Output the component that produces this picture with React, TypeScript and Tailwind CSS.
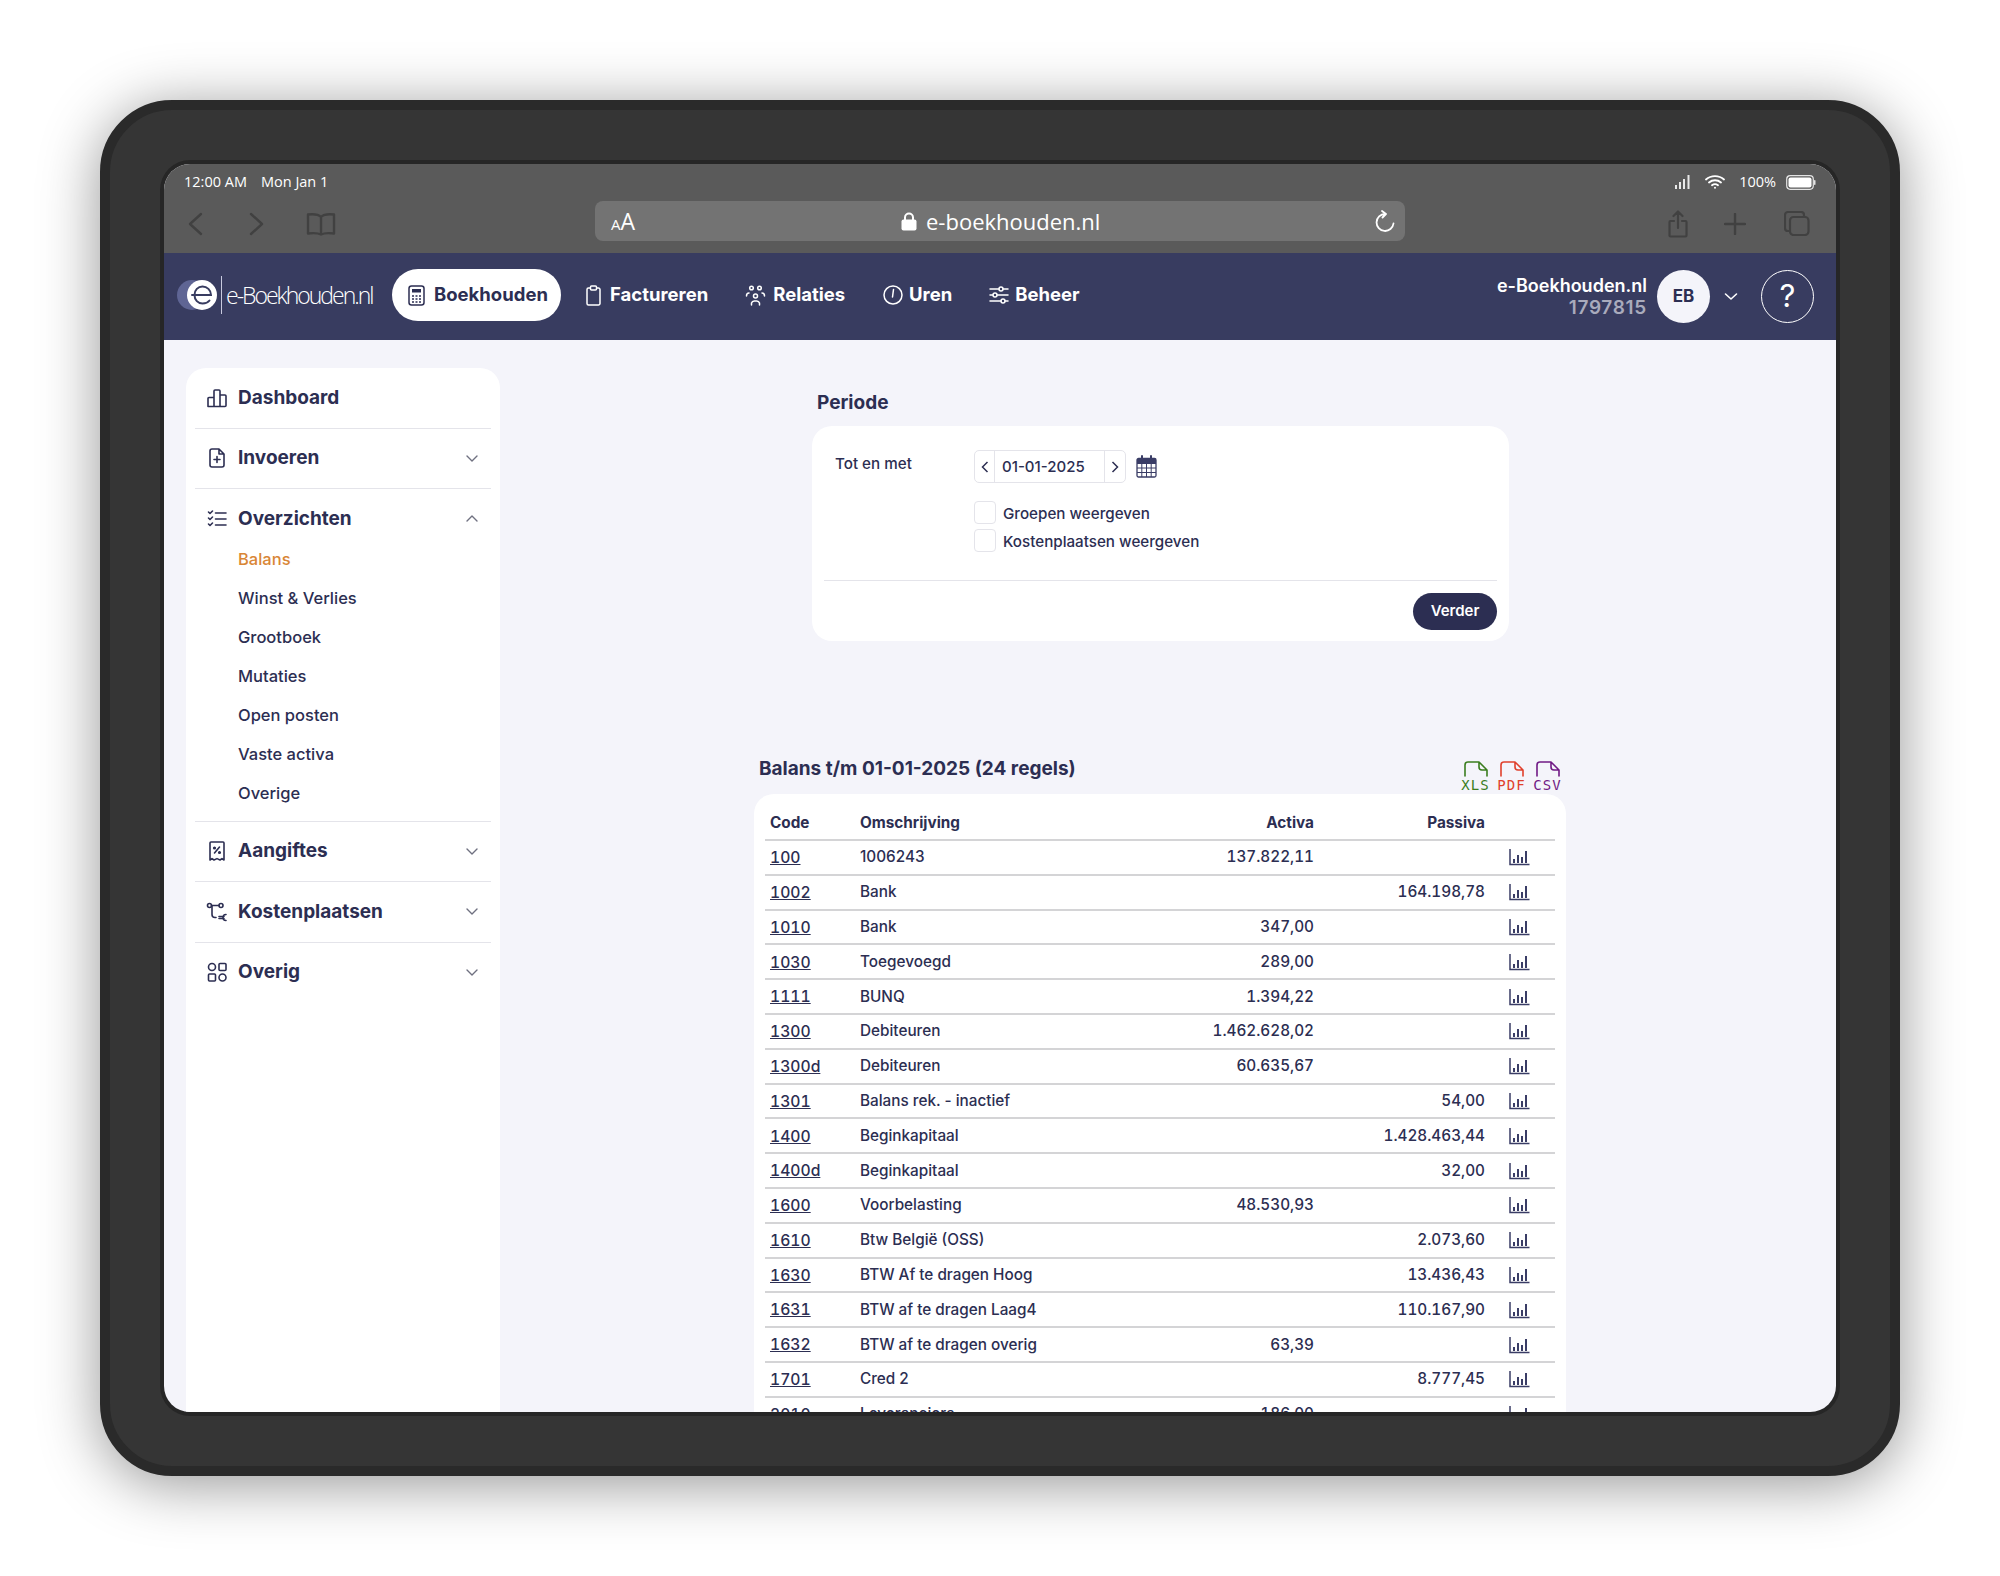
import React from "react";

const ink = "#2c2e52";

const rows: [string, string, string, string][] = [
  ["100", "1006243", "137.822,11", ""],
  ["1002", "Bank", "", "164.198,78"],
  ["1010", "Bank", "347,00", ""],
  ["1030", "Toegevoegd", "289,00", ""],
  ["1111", "BUNQ", "1.394,22", ""],
  ["1300", "Debiteuren", "1.462.628,02", ""],
  ["1300d", "Debiteuren", "60.635,67", ""],
  ["1301", "Balans rek. - inactief", "", "54,00"],
  ["1400", "Beginkapitaal", "", "1.428.463,44"],
  ["1400d", "Beginkapitaal", "", "32,00"],
  ["1600", "Voorbelasting", "48.530,93", ""],
  ["1610", "Btw België (OSS)", "", "2.073,60"],
  ["1630", "BTW Af te dragen Hoog", "", "13.436,43"],
  ["1631", "BTW af te dragen Laag4", "", "110.167,90"],
  ["1632", "BTW af te dragen overig", "63,39", ""],
  ["1701", "Cred 2", "", "8.777,45"],
  ["2010", "Leveranciers", "186,00", ""],
];

function Chevron({ up = false }: { up?: boolean }) {
  return (
    <svg width="14" height="9" viewBox="0 0 14 9" fill="none" stroke="#6f7080" strokeWidth="1.4" strokeLinecap="round" strokeLinejoin="round">
      <path d={up ? "M2 7l5-5 5 5" : "M2 2l5 5 5-5"} />
    </svg>
  );
}

function Stroke({ children, w = 22, h = 22, color = ink, sw = 1.6 }: { children: React.ReactNode; w?: number; h?: number; color?: string; sw?: number }) {
  return (
    <svg width={w} height={h} viewBox="0 0 22 22" fill="none" stroke={color} strokeWidth={sw} strokeLinecap="round" strokeLinejoin="round" className="shrink-0">
      {children}
    </svg>
  );
}

const IconDashboard = () => (
  <Stroke><path d="M2 19.500V11.500a1 1 0 0 1 1-1h5v9H3a1 1 0 0 1-1-1zM8 19.500V4a1 1 0 0 1 1-1h4a1 1 0 0 1 1 1v15.500M14 8h5a1 1 0 0 1 1 1v9.500a1 1 0 0 1-1 1H3" /></Stroke>
);
const IconInvoeren = () => (
  <Stroke><path d="M13 2H6a2 2 0 0 0-2 2v14a2 2 0 0 0 2 2h10a2 2 0 0 0 2-2V7l-5-5zM13 2v5h5M11 9.500v6M8 12.500h6" /></Stroke>
);
const IconOverzichten = () => (
  <Stroke><path d="M9.500 5H20M9.500 11H20M9.500 17H20M2.500 4l1.500 1.500L6.500 3M2.500 10l1.500 1.500L6.500 9M2.500 16l1.500 1.500L6.500 15" /></Stroke>
);
const IconAangiftes = () => (
  <Stroke>
    <path d="M4 20V3a1 1 0 0 1 1-1h12a1 1 0 0 1 1 1v17l-2-1.400-2 1.400-3-1.400-3 1.400-2-1.400-2 1.400zM8.500 13l5-6" />
    <circle cx="8.500" cy="8" r="0.800" fill={ink} />
    <circle cx="13.500" cy="12.500" r="0.800" fill={ink} />
  </Stroke>
);
const IconKosten = () => (
  <Stroke><circle cx="3.500" cy="4.500" r="2" /><circle cx="15" cy="4.500" r="2" /><path d="M5.500 4.500h7.500M6 4.500v9a3 3 0 0 0 3 3h1" /><path d="M20 13.500a3 3 0 1 0 0 6M13 15.500h5M13 17.500h5" /></Stroke>
);
const IconOverig = () => (
  <Stroke><circle cx="6" cy="6" r="3.500" /><rect x="13" y="2.500" width="7" height="7" rx="1" /><rect x="2.500" y="13" width="7" height="7" rx="1" /><circle cx="16.500" cy="16.500" r="3.500" /></Stroke>
);

function NavHead({ icon, label, chevron, up }: { icon: React.ReactNode; label: string; chevron?: boolean; up?: boolean }) {
  return (
    <div className="flex h-[59.500px] items-center pl-[11px] pr-[12px]">
      <span className="flex w-[22px] justify-center">{icon}</span>
      <span className="ml-[10px] flex-1 text-[19px] font-bold text-[#2c2e52]">{label}</span>
      {chevron && <Chevron up={up} />}
    </div>
  );
}

function ChartIcon() {
  return (
    <svg width="21" height="18" viewBox="0 0 21 18" fill="none" stroke="#3a3d66" strokeWidth="1.500" className="block">
      <path d="M1 1v15.500h19.500" />
      <path d="M5 15v-4M9 15V7M13 15v-6M17 15V3" strokeWidth="2" />
    </svg>
  );
}

function FileBadge({ label, color }: { label: string; color: string }) {
  return (
    <div className="flex w-[27px] flex-col items-center">
      <svg width="24" height="16" viewBox="0 0 24 16" fill="none" stroke={color} strokeWidth="1.600" strokeLinejoin="round" strokeLinecap="round">
        <path d="M1 15V4a3 3 0 0 1 3-3h11l8 8v6M15 1v5a3 3 0 0 0 3 3h5" />
      </svg>
      <span className="mt-[1px] whitespace-nowrap font-['DejaVu_Sans_Mono',monospace] text-[14px] leading-[14px] tracking-[1px]" style={{ color }}>{label}</span>
    </div>
  );
}

export default function App() {
  return (
    <div className="h-[1576px] w-[2000px] overflow-hidden bg-white p-[100px] font-['Inter',sans-serif]">
      <div className="h-[1376px] w-[1800px] rounded-[72px] border-[10px] border-[#2a2a2a] bg-[#353535] p-[50px] pb-[50px] shadow-[0_8px_60px_rgba(0,0,0,0.42)]">
        <div className="rounded-[30px] bg-[#262626] p-[4px]">
          <div className="flex h-[1248px] w-[1672px] flex-col overflow-hidden rounded-[26px] bg-[#f4f4fa]">
            {/* browser chrome */}
            <div className="h-[89px] shrink-0 bg-[#5a5a5a] pl-[20px] pr-[20px] pt-[8px]">
              <div className="flex h-[20px] items-center font-['Open_Sans',sans-serif] text-[14.500px] text-white">
                <span>12:00 AM</span>
                <span className="ml-[14px]">Mon Jan 1</span>
                <span className="flex-1" />
                <svg width="16" height="14" viewBox="0 0 16 14" fill="#e8e8e8" className="mr-[14px]">
                  <rect x="0" y="10" width="2" height="4" /><rect x="4" y="7" width="2" height="7" /><rect x="8" y="4" width="2" height="10" /><rect x="12.500" y="0" width="2" height="14" />
                </svg>
                <svg width="20" height="14" viewBox="0 0 20 14" fill="none" stroke="#fff" strokeWidth="1.800" strokeLinecap="round" className="mr-[14px]">
                  <path d="M1 4.500c5-4.500 13-4.500 18 0M4 7.500c3.500-3 8.500-3 12 0M7 10.300c1.700-1.400 4.300-1.400 6 0" />
                  <circle cx="10" cy="12.700" r="1" fill="#fff" stroke="none" />
                </svg>
                <span className="mr-[10px]">100%</span>
                <svg width="30" height="15" viewBox="0 0 30 15">
                  <rect x="0.700" y="0.700" width="26.600" height="13.600" rx="3.500" fill="none" stroke="#e4e4e4" strokeWidth="1.200" />
                  <rect x="2.500" y="2.500" width="23" height="10" rx="2" fill="#fff" />
                  <rect x="28" y="5" width="1.500" height="5" rx="0.700" fill="#e4e4e4" />
                </svg>
              </div>
              <div className="mt-[9px] flex h-[40px] items-center">
                <svg width="16" height="24" viewBox="0 0 16 24" fill="none" stroke="#414141" strokeWidth="2.400" strokeLinecap="round" strokeLinejoin="round" className="ml-[3px] mt-[6px]"><path d="M14 2L3 12l11 10" /></svg>
                <svg width="16" height="24" viewBox="0 0 16 24" fill="none" stroke="#414141" strokeWidth="2.400" strokeLinecap="round" strokeLinejoin="round" className="ml-[46px] mt-[6px]"><path d="M2 2l11 10L2 22" /></svg>
                <svg width="30" height="24" viewBox="0 0 30 24" fill="none" stroke="#414141" strokeWidth="2.400" strokeLinejoin="round" className="ml-[41px] mt-[6px]"><path d="M15 5C12 2 6 2 2 2.500v19C6 21 12 21 15 22.500 18 21 24 21 28 21.500v-19C24 2 18 2 15 5zM15 5v17" /></svg>
                <div className="ml-[259px] flex h-[40px] w-[810px] items-center rounded-[8px] bg-[#737373] pl-[16px] pr-[9px] font-['Open_Sans',sans-serif] text-white">
                  <span className="w-[290px] text-[23px] leading-none"><span className="text-[15px]">A</span>A</span>
                  <svg width="16" height="19" viewBox="0 0 16 19" fill="#fff" className="mr-[9px]">
                    <path d="M4 8V5.500a4 4 0 0 1 8 0V8" fill="none" stroke="#fff" strokeWidth="2" />
                    <rect x="0.500" y="7.500" width="15" height="11" rx="2" />
                  </svg>
                  <span className="mt-[1px] flex-1 text-[22px] font-normal">e-boekhouden.nl</span>
                  <svg width="22" height="24" viewBox="0 0 22 24" fill="none" stroke="#fff" strokeWidth="1.800" strokeLinecap="round" strokeLinejoin="round" className="mt-[2px]">
                    <path d="M11 4a8.500 8.500 0 1 0 8.500 9.500M8 1l4 3-3.500 3.500" />
                  </svg>
                </div>
                <svg width="20" height="28" viewBox="0 0 20 28" fill="none" stroke="#414141" strokeWidth="2.200" strokeLinecap="round" strokeLinejoin="round" className="ml-[263px] mt-[5px]"><path d="M6 11H2.500a1 1 0 0 0-1 1v13.500a1 1 0 0 0 1 1h15a1 1 0 0 0 1-1V12a1 1 0 0 0-1-1H14M10 18V2M5.500 6L10 1.500 14.500 6" /></svg>
                <svg width="22" height="22" viewBox="0 0 22 22" fill="none" stroke="#414141" strokeWidth="2.400" strokeLinecap="round" className="ml-[36px] mt-[5px]"><path d="M11 1v20M1 11h20" /></svg>
                <svg width="26" height="25" viewBox="0 0 26 25" fill="none" stroke="#414141" strokeWidth="2.200" strokeLinejoin="round" className="ml-[38px] mt-[5px]"><rect x="6" y="6" width="18.500" height="18" rx="3.500" /><path d="M6 20H4a3 3 0 0 1-3-3V4a3 3 0 0 1 3-3h13a3 3 0 0 1 3 3v2" /></svg>
              </div>
            </div>

            {/* app nav */}
            <div className="flex h-[87px] shrink-0 items-center bg-[#383c60] text-white">
              <div className="flex items-center pb-[3px]">
                <div className="ml-[13px] flex items-center">
                  <div className="relative h-[30px] w-[44px]">
                    <div className="absolute left-0 top-0 h-[30px] w-[30px] rounded-full bg-[#5f6594]" />
                    <div className="absolute left-[10px] top-0 flex h-[30px] w-[30px] items-center justify-center rounded-full bg-white">
                      <svg width="22" height="20" viewBox="0 0 22 20" fill="none" stroke="#383c60" strokeWidth="2" strokeLinecap="round"><path d="M1 10h19c0-5-4-8.500-8.500-8.500S3.500 5 3.500 10 7 18.500 11.500 18.500c3 0 5.500-1 7-3" /></svg>
                    </div>
                  </div>
                  <div className="h-[38px] w-px bg-[#c8cade]" />
                  <span className="ml-[4px] w-[166px] whitespace-nowrap font-['Open_Sans',sans-serif] text-[23px] font-light tracking-[-2px]">e-Boekhouden.nl</span>
                </div>
                <div className="flex h-[52px] w-[169px] items-center rounded-full bg-white pl-[16px] text-[#2c2e52]">
                  <svg width="17" height="21" viewBox="0 0 17 21" fill="none" stroke="#2c2e52" strokeWidth="1.500"><rect x="1" y="1" width="15" height="19" rx="2.500" /><rect x="4" y="4" width="9" height="3.500" fill="#2c2e52" stroke="none" /><path d="M4 11h2M7.500 11h2M11 11h2M4 14h2M7.500 14h2M11 14h2M4 17h2M7.500 17h2M11 17h2" strokeWidth="1.600" /></svg>
                  <span className="ml-[9px] text-[18.500px] font-bold">Boekhouden</span>
                </div>
                <div className="ml-[25px] flex items-center">
                  <svg width="15" height="21" viewBox="0 0 15 21" fill="none" stroke="#fff" strokeWidth="1.500" strokeLinejoin="round"><path d="M4.500 3H2.500a1.500 1.500 0 0 0-1.500 1.500v14A1.500 1.500 0 0 0 2.500 20h10a1.500 1.500 0 0 0 1.500-1.500v-14A1.500 1.500 0 0 0 12.500 3h-2" /><rect x="4.500" y="1" width="6" height="4" rx="1" /></svg>
                  <span className="ml-[9px] text-[18.500px] font-bold">Factureren</span>
                </div>
                <div className="ml-[37px] flex items-center">
                  <svg width="21" height="21" viewBox="0 0 21 21" fill="none" stroke="#fff" strokeWidth="1.500" strokeLinecap="round"><circle cx="6.500" cy="3" r="1.800" /><circle cx="14.500" cy="3" r="1.800" /><circle cx="10.500" cy="11" r="2" /><path d="M6.500 20v-2a3 3 0 0 1 3-2h2a3 3 0 0 1 3 2v2M1.500 11c0-2 1-3 2.500-3M19.500 11c0-2-1-3-2.500-3" /></svg>
                  <span className="ml-[7px] text-[18.500px] font-bold">Relaties</span>
                </div>
                <div className="ml-[38px] flex items-center">
                  <svg width="20" height="20" viewBox="0 0 20 20" fill="none" stroke="#fff" strokeWidth="1.500" strokeLinecap="round"><circle cx="10" cy="10" r="9" /><path d="M10.500 4.500L9.500 12" /></svg>
                  <span className="ml-[6px] text-[18.500px] font-bold">Uren</span>
                </div>
                <div className="ml-[37px] flex items-center">
                  <svg width="20" height="20" viewBox="0 0 20 20" fill="none" stroke="#fff" strokeWidth="1.500" strokeLinecap="round"><path d="M1 4h9M14 4h5M1 10h3M8 10h11M1 16h11M16 16h3" /><circle cx="12" cy="4" r="2" /><circle cx="6" cy="10" r="2" /><circle cx="14" cy="16" r="2" /></svg>
                  <span className="ml-[6px] text-[18.500px] font-bold">Beheer</span>
                </div>
              </div>
              <div className="flex-1" />
              <div className="mr-[10px] text-right leading-[22px]">
                <div className="text-[18px] font-semibold">e-Boekhouden.nl</div>
                <div className="text-[19px] font-semibold tracking-[0.700px] text-[#a9abbc]">1797815</div>
              </div>
              <div className="flex h-[53px] w-[53px] items-center justify-center rounded-full bg-[#f4f4fa] text-[17px] font-bold text-[#2c2e52]">EB</div>
              <svg width="14" height="9" viewBox="0 0 14 9" fill="none" stroke="#fff" strokeWidth="1.600" strokeLinecap="round" strokeLinejoin="round" className="ml-[14px]"><path d="M1.500 2l5.500 5 5.500-5" /></svg>
              <div className="ml-[23px] mr-[22px] flex h-[53px] w-[53px] items-center justify-center rounded-full border border-white text-[31px] font-normal text-white">?</div>
            </div>

            {/* body */}
            <div className="flex min-h-0 flex-1 overflow-hidden">
              {/* sidebar */}
              <aside className="ml-[22px] mt-[28px] w-[314px] shrink-0 rounded-t-[20px] bg-white px-[9px]">
                <NavHead icon={<IconDashboard />} label="Dashboard" />
                <div className="border-t border-[#e4e4ea]">
                  <NavHead icon={<IconInvoeren />} label="Invoeren" chevron />
                </div>
                <div className="border-t border-[#e4e4ea] pb-[8px]">
                  <NavHead icon={<IconOverzichten />} label="Overzichten" chevron up />
                  <ul className="-mt-[9px] pl-[43px] text-[16.500px] font-medium leading-[39px] text-[#2c2e52]">
                    <li className="text-[#d98636]">Balans</li>
                    <li>Winst &amp; Verlies</li>
                    <li>Grootboek</li>
                    <li>Mutaties</li>
                    <li>Open posten</li>
                    <li>Vaste activa</li>
                    <li>Overige</li>
                  </ul>
                </div>
                <div className="border-t border-[#e4e4ea]">
                  <NavHead icon={<IconAangiftes />} label="Aangiftes" chevron />
                </div>
                <div className="border-t border-[#e4e4ea]">
                  <NavHead icon={<IconKosten />} label="Kostenplaatsen" chevron />
                </div>
                <div className="border-t border-[#e4e4ea]">
                  <NavHead icon={<IconOverig />} label="Overig" chevron />
                </div>
              </aside>

              {/* main */}
              <main className="ml-[250px] min-w-0 flex-1 overflow-hidden">
                <div className="ml-[62px] w-[697px]">
                  <h2 className="ml-[5px] mt-[50px] text-[19px] font-bold leading-[26px] text-[#2c2e52]">Periode</h2>
                  <div className="mt-[10px] h-[215px] rounded-[20px] bg-white px-[12px] pt-[24px]">
                    <div className="flex">
                      <span className="ml-[11px] mt-[4px] w-[139px] text-[15.200px] font-medium leading-[20px] text-[#2c2e52]">Tot en met</span>
                      <div>
                        <div className="flex items-center">
                          <div className="flex h-[33px] w-[152px] items-stretch rounded-[5px] border border-[#e4e4ea] text-[15px] text-[#2c2e52]">
                            <span className="flex w-[20px] items-center justify-center border-r border-[#e4e4ea]">
                              <svg width="8" height="12" viewBox="0 0 8 12" fill="none" stroke="#2c2e52" strokeWidth="1.500"><path d="M6.500 1L1.500 6l5 5" /></svg>
                            </span>
                            <span className="flex flex-1 items-center pl-[7px] pt-[1px] font-medium">01-01-2025</span>
                            <span className="flex w-[21px] items-center justify-center border-l border-[#e4e4ea]">
                              <svg width="8" height="12" viewBox="0 0 8 12" fill="none" stroke="#2c2e52" strokeWidth="1.500"><path d="M1.500 1l5 5-5 5" /></svg>
                            </span>
                          </div>
                          <svg width="21" height="23" viewBox="0 0 21 23" fill="none" stroke="#3a3d66" strokeWidth="1.300" className="ml-[10px]">
                            <rect x="1" y="3.500" width="19" height="18.500" rx="1.500" />
                            <path d="M1 8.500h19M1 13h19M1 17.500h19M5.800 8.500V22M10.500 8.500V22M15.200 8.500V22" strokeWidth="1" />
                            <path d="M1 6h19" strokeWidth="4" />
                            <path d="M6 1v4M15 1v4" strokeWidth="2" strokeLinecap="round" />
                          </svg>
                        </div>
                        <div className="mt-[18px] flex h-[23px] items-center">
                          <span className="h-[23px] w-[22px] rounded-[4px] border border-[#e4e4ea] bg-white" />
                          <span className="ml-[7px] pt-[3px] text-[15.200px] font-medium text-[#2c2e52]">Groepen weergeven</span>
                        </div>
                        <div className="mt-[5px] flex h-[23px] items-center">
                          <span className="h-[23px] w-[22px] rounded-[4px] border border-[#e4e4ea] bg-white" />
                          <span className="ml-[7px] pt-[3px] text-[15.200px] font-medium text-[#2c2e52]">Kostenplaatsen weergeven</span>
                        </div>
                      </div>
                    </div>
                    <div className="mt-[28px] border-t border-[#e4e4ea]" />
                    <div className="mt-[12px] flex justify-end">
                      <span className="flex h-[37px] w-[84px] items-center justify-center rounded-full bg-[#2c2e52] text-[15px] font-semibold text-white">Verder</span>
                    </div>
                  </div>
                </div>

                <div className="ml-[4px] mt-[112px] w-[812px]">
                  <div className="flex h-[41px] items-start">
                    <h2 className="ml-[5px] mt-[3px] flex-1 text-[19px] font-bold leading-[26px] text-[#2c2e52]">Balans t/m 01-01-2025 (24 regels)</h2>
                    <div className="mr-[5px] mt-[8px] flex gap-[9px]">
                      <FileBadge label="XLS" color="#3a7d1e" />
                      <FileBadge label="PDF" color="#e0402c" />
                      <FileBadge label="CSV" color="#701a85" />
                    </div>
                  </div>
                  <div className="rounded-t-[20px] bg-white px-[11px] pt-[12px]">
                    <table className="w-full table-fixed border-collapse text-[15.300px] text-[#2c2e52]">
                      <thead>
                        <tr className="h-[34px] border-b-2 border-[#d4d4d6]">
                          <th className="w-[95px] pl-[5px] pt-[1px] text-left font-bold">Code</th>
                          <th className="w-[290px] pt-[1px] text-left font-bold">Omschrijving</th>
                          <th className="w-[164px] pt-[1px] text-right font-bold">Activa</th>
                          <th className="w-[171px] pt-[1px] text-right font-bold">Passiva</th>
                          <th />
                        </tr>
                      </thead>
                      <tbody>
                        {rows.map((r) => (
                          <tr key={r[0]} className="h-[34.800px] border-b-2 border-[#d4d4d6]">
                            <td className="pl-[5px] pt-[1px] text-[15.700px] font-medium tabular-nums underline">{r[0]}</td>
                            <td className="pt-[1px] font-medium">{r[1]}</td>
                            <td className="pt-[1px] text-right font-medium tabular-nums">{r[2]}</td>
                            <td className="pt-[1px] text-right font-medium tabular-nums">{r[3]}</td>
                            <td className="pl-[24px]"><ChartIcon /></td>
                          </tr>
                        ))}
                      </tbody>
                    </table>
                  </div>
                </div>
              </main>
            </div>
          </div>
        </div>
      </div>
    </div>
  );
}
